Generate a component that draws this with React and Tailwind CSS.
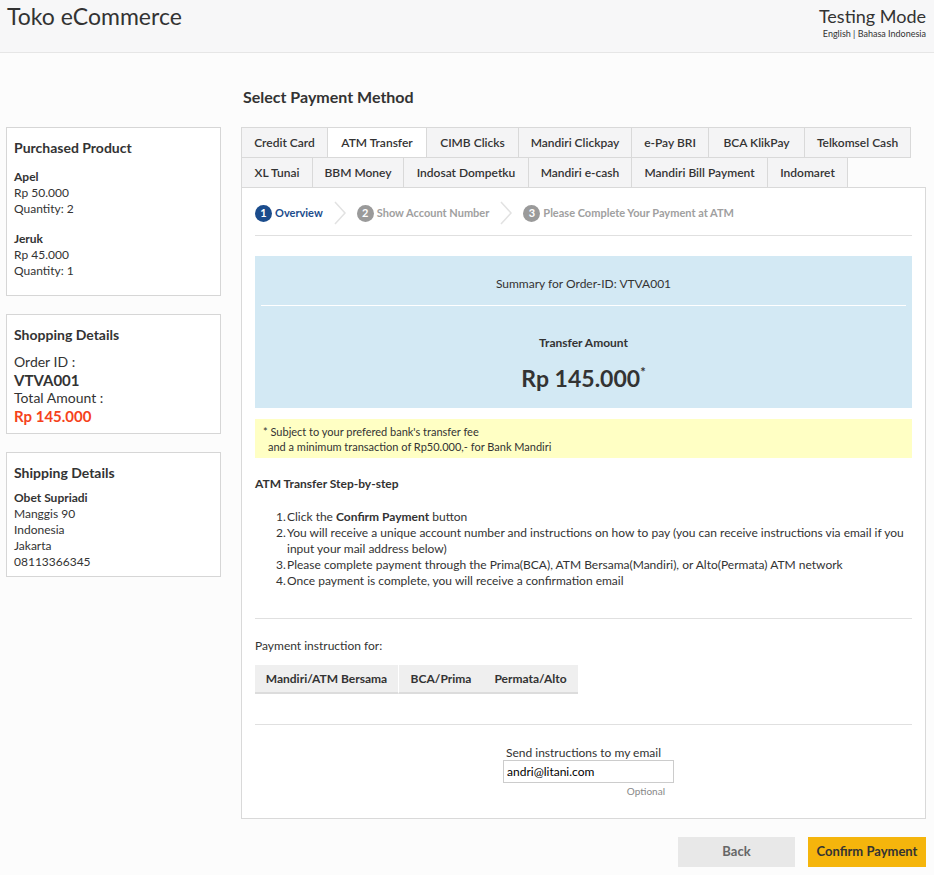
import React from "react";

const font = { fontFamily: "Lato, 'Open Sans', sans-serif" };

const row1 = [
  ["Credit Card", "w-[87px]"],
  ["ATM Transfer", "w-[100px]"],
  ["CIMB Clicks", "w-[93px]"],
  ["Mandiri Clickpay", "w-[114px]"],
  ["e-Pay BRI", "w-[78px]"],
  ["BCA KlikPay", "w-[97px]"],
  ["Telkomsel Cash", "w-[107px]"],
];
const row2 = [
  ["XL Tunai", "w-[72px]"],
  ["BBM Money", "w-[92px]"],
  ["Indosat Dompetku", "w-[126px]"],
  ["Mandiri e-cash", "w-[104px]"],
  ["Mandiri Bill Payment", "w-[137px]"],
  ["Indomaret", "w-[81px]"],
];

function Tab({ label, w, active }) {
  return (
    <div
      className={`${w} h-[31px] -mr-px flex items-center justify-center border border-[#d9d9d9] text-[12px] font-semibold text-[#333] ${
        active ? "bg-white" : "bg-[#f4f4f5]"
      }`}
    >
      {label}
    </div>
  );
}

function Chevron() {
  return (
    <svg width="14" height="24" viewBox="0 0 14 24" className="mx-[10px]">
      <path d="M2 1 L12 12 L2 23" fill="none" stroke="#e2e2e2" strokeWidth="1.5" />
    </svg>
  );
}

function Step({ n, label, active }) {
  return (
    <div className="flex items-center gap-[3px]">
      <span
        className={`w-[17px] h-[17px] rounded-full flex items-center justify-center text-white text-[11px] font-bold ${
          active ? "bg-[#1b4c8c]" : "bg-[#9a9a9a]"
        }`}
      >
        {n}
      </span>
      <span className={`text-[11px] font-bold ${active ? "text-[#1b4c8c]" : "text-[#a0a0a0]"}`}>
        {label}
      </span>
    </div>
  );
}

function SideBox({ title, gap, pb, children }) {
  return (
    <div className={`border border-[#d6d6d6] bg-white px-[7px] pt-[11px] ${pb} text-[#333]`}>
      <div className={`text-[14px] leading-[18px] font-bold ${gap}`}>{title}</div>
      {children}
    </div>
  );
}

export default function App() {
  return (
    <div style={font} className="min-h-[875px] bg-[#fcfcfc] text-[#333]">
      <header className="h-[53px] bg-[#f7f7f8] border-b border-[#e6e6e6] flex justify-between px-[7px]">
        <div className="text-[23px] pt-[1px] leading-[30px]">Toko eCommerce</div>
        <div className="text-right pt-[5px] pr-[1px]">
          <div className="text-[18px] leading-[22px]">Testing Mode</div>
          <div className="text-[9px] leading-[12px] mt-[1px]">English | Bahasa Indonesia</div>
        </div>
      </header>

      <div className="flex gap-[20px] px-[6px]">
        <aside className="w-[215px] pt-[74px] flex flex-col gap-[18px]">
          <SideBox title="Purchased Product" gap="mb-[12px]" pb="pb-[16px]">
            <div className="text-[12px] leading-[16px]">
              <div className="font-bold">Apel</div>
              <div>Rp 50.000</div>
              <div>Quantity: 2</div>
              <div className="font-bold mt-[14px]">Jeruk</div>
              <div>Rp 45.000</div>
              <div>Quantity: 1</div>
            </div>
          </SideBox>
          <SideBox title="Shopping Details" gap="mb-[9px]" pb="pb-[8px]">
            <div className="text-[14px] leading-[18px]">
              <div>Order ID :</div>
              <div className="font-bold text-[15px]">VTVA001</div>
              <div>Total Amount :</div>
              <div className="font-bold text-[15px] text-[#f5421b]">Rp 145.000</div>
            </div>
          </SideBox>
          <SideBox title="Shipping Details" gap="mb-[8px]" pb="pb-[6px]">
            <div className="text-[12px] leading-[16px]">
              <div className="font-bold">Obet Supriadi</div>
              <div>Manggis 90</div>
              <div>Indonesia</div>
              <div>Jakarta</div>
              <div>08113366345</div>
            </div>
          </SideBox>
        </aside>

        <main className="w-[685px]">
          <h1 className="text-[16px] font-bold pt-[33px] pb-[19px] pl-[2px] leading-[22px]">Select Payment Method</h1>
          <div className="flex">
            {row1.map(([l, w]) => (
              <Tab key={l} label={l} w={w} active={l === "ATM Transfer"} />
            ))}
          </div>
          <div className="flex -mt-px">
            {row2.map(([l, w]) => (
              <Tab key={l} label={l} w={w} />
            ))}
          </div>
          <section className="-mt-px bg-white border border-[#d9d9d9] px-[13px] pb-[11px]">
            <div className="flex items-center h-[48px] pt-[3px] border-b border-[#e0e0e0]">
              <Step n="1" label="Overview" active />
              <Chevron />
              <Step n="2" label="Show Account Number" />
              <Chevron />
              <Step n="3" label="Please Complete Your Payment at ATM" />
            </div>

            <div className="mt-[20px] bg-[#d3e9f4]">
              <div className="h-[49px] flex items-end justify-center pb-[12px] text-[12px]">
                Summary for Order-ID: VTVA001
              </div>
              <div className="mx-[6px] border-t border-white" />
              <div className="text-center pt-[29px] pb-[12px]">
                <div className="text-[12px] font-bold leading-[16px]">Transfer Amount</div>
                <div className="text-[23px] font-bold mt-[13px] leading-[28px]">
                  Rp 145.000<span className="text-[13px] relative top-[-10px]">*</span>
                </div>
              </div>
            </div>
            <div className="bg-[#ffffc4] text-[11px] leading-[15px] px-[8px] pt-[5px] pb-[4px] mt-[11px]">
              <div>* Subject to your prefered bank's transfer fee</div>
              <div className="pl-[5px]">and a minimum transaction of Rp50.000,- for Bank Mandiri</div>
            </div>

            <div className="text-[12px] font-bold mt-[18px] leading-[16px]">ATM Transfer Step-by-step</div>
            <ol className="mt-[17px] pl-[21px] text-[12px] leading-[16px] list-none">
              <li className="flex"><span className="w-[11px]">1.</span><span>Click the <b>Confirm Payment</b> button</span></li>
              <li className="flex"><span className="w-[11px] shrink-0">2.</span><span>You will receive a unique account number and instructions on how to pay (you can receive instructions via email if you input your mail address below)</span></li>
              <li className="flex"><span className="w-[11px]">3.</span><span>Please complete payment through the Prima(BCA), ATM Bersama(Mandiri), or Alto(Permata) ATM network</span></li>
              <li className="flex"><span className="w-[11px]">4.</span><span>Once payment is complete, you will receive a confirmation email</span></li>
            </ol>

            <div className="border-t border-[#e0e0e0] mt-[29px]" />
            <div className="text-[12px] mt-[19px] leading-[16px]">Payment instruction for:</div>
            <div className="flex mt-[11px] text-[12px] font-bold">
              <div className="w-[144px] h-[29px] flex items-center justify-center bg-[#efefef] border-b-2 border-[#dcdcdc] border-r border-r-white">Mandiri/ATM Bersama</div>
              <div className="w-[84px] h-[29px] flex items-center justify-center bg-[#efefef] border-b-2 border-[#dcdcdc]">BCA/Prima</div>
              <div className="w-[95px] h-[29px] flex items-center justify-center bg-[#efefef] border-b-2 border-[#dcdcdc]">Permata/Alto</div>
            </div>

            <div className="border-t border-[#e0e0e0] mt-[30px]" />
            <div className="flex flex-col items-center mt-[20px] pb-[8px]">
              <div className="text-[12px] leading-[14px] mt-[1px]">Send instructions to my email</div>
              <input
                readOnly
                value="andri@litani.com"
                style={font}
                className="w-[171px] h-[23px] border border-[#ccc] px-[3px] text-[12px] text-black ml-[10px] outline-none"
              />
              <div className="w-[171px] ml-[10px] pr-[9px] text-right text-[10px] text-[#888] mt-[1px]">Optional</div>
            </div>
          </section>

          <div className="flex justify-end gap-[13px] mt-[18px]">
            <button className="w-[117px] h-[30px] bg-[#e8e8e8] text-[13px] font-bold text-[#666]">Back</button>
            <button className="w-[118px] h-[30px] bg-[#f5b50c] text-[13px] font-bold text-[#333]">Confirm Payment</button>
          </div>
        </main>
      </div>
    </div>
  );
}
